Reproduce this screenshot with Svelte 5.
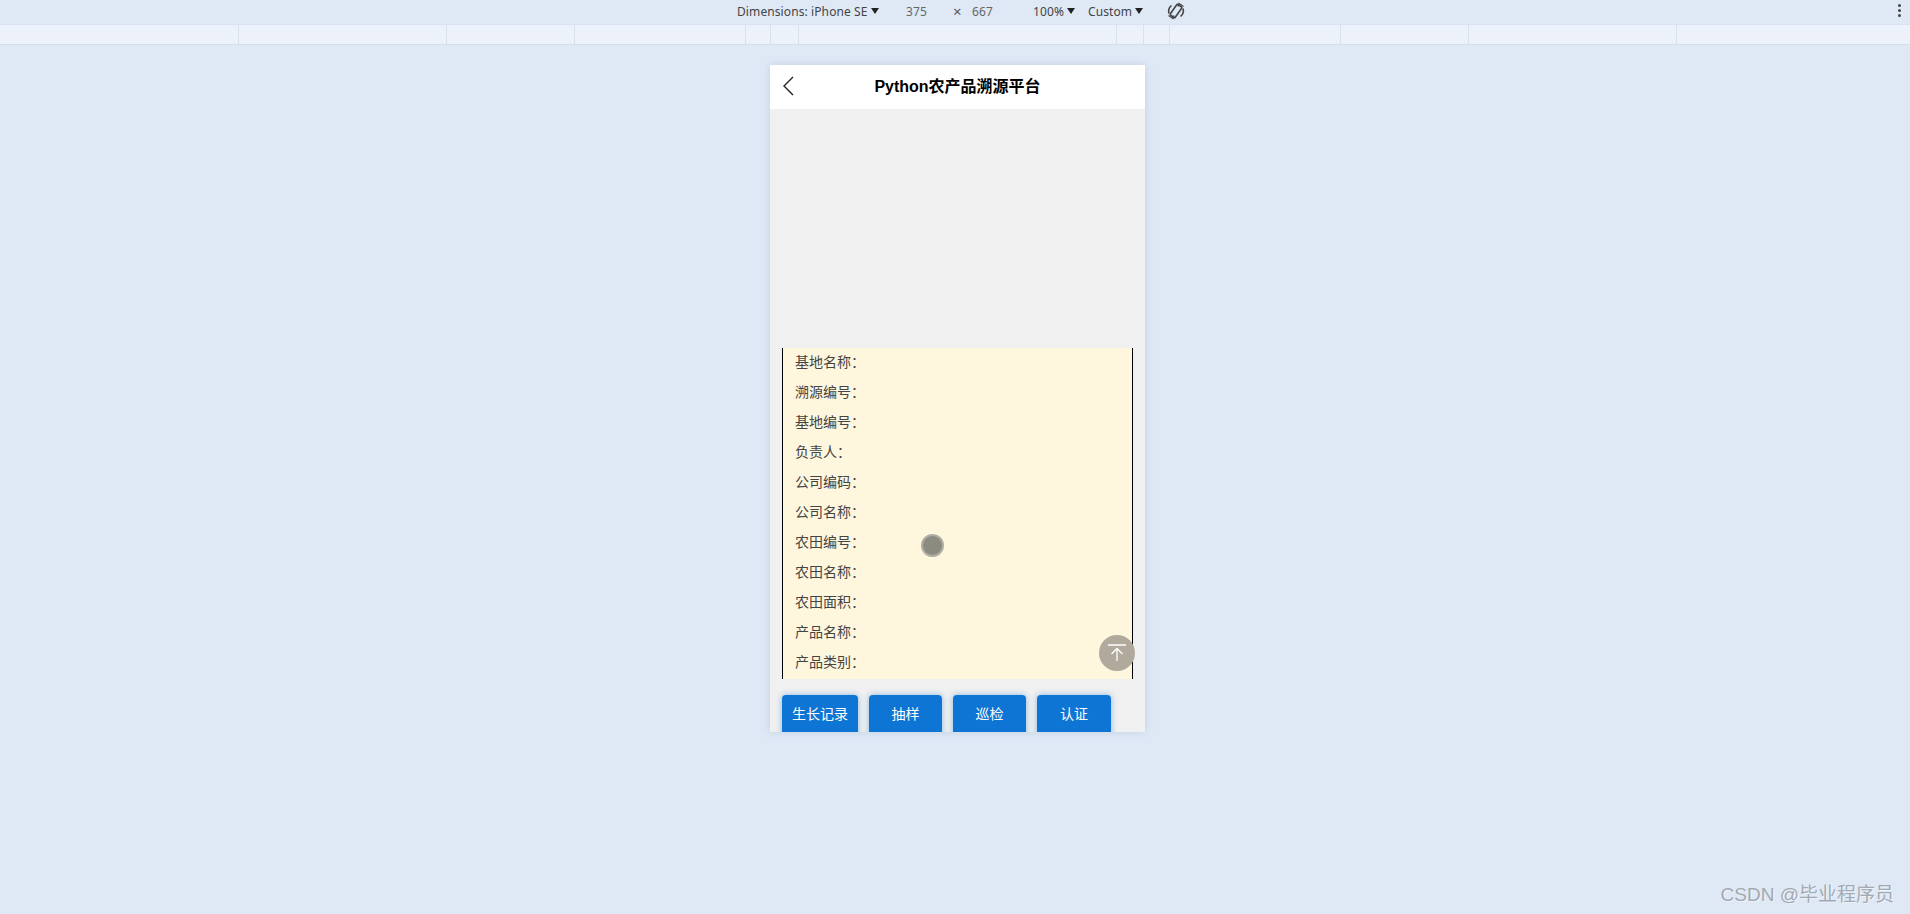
<script>
  const ticks = [239, 208, 128, 171, 25, 28, 318, 27, 26, 171, 128, 208]
  const fields = ['基地名称', '溯源编号', '基地编号', '负责人', '公司编码', '公司名称', '农田编号', '农田名称', '农田面积', '产品名称', '产品类别']
  const actions = [
    { label: '生长记录', w: 76 },
    { label: '抽样', w: 73 },
    { label: '巡检', w: 73 },
    { label: '认证', w: 74 }
  ]
</script>

<div class="page">
  <div class="toolbar">
    <span class="dim">Dimensions: iPhone SE<i class="caret"></i></span>
    <span class="num w375">375</span>
    <span class="times">×</span>
    <span class="num w667">667</span>
    <span class="zoom">100%<i class="caret"></i></span>
    <span class="custom">Custom<i class="caret"></i></span>
    <svg class="rotate" width="20" height="22" viewBox="0 0 20 22" fill="none" stroke="#444" stroke-width="1.6">
      <rect x="7" y="4.5" width="6" height="13" rx="1" transform="rotate(35 10 11)" />
      <path d="M3 13.5a7.5 7.5 0 0 1 2.5-8M17 8.5a7.5 7.5 0 0 1-2.5 8" />
      <path d="M2.5 15.5 7 18.5 8 15.5M17.5 6.5 13 3.5 12 6.5" stroke-width="1.2" />
    </svg>
    <span class="dots"><i></i><i></i><i></i></span>
  </div>
  <div class="ruler">
    {#each ticks as t}
      <span class="tick" style="width: {t}px"></span>
    {/each}
  </div>

  <div class="phone">
    <header>
      <svg class="back" width="12" height="20" viewBox="0 0 12 20" fill="none" stroke="#222" stroke-width="1.4">
        <path d="M11 1 2 10l9 9" />
      </svg>
      <h1>Python农产品溯源平台</h1>
    </header>
    <div class="banner"></div>
    <div class="detail">
      {#each fields as f}
        <div class="row">{f}：</div>
      {/each}
    </div>
    <div class="actions">
      {#each actions as a}
        <button style="width: {a.w}px">{a.label}</button>
      {/each}
    </div>
    <div class="to-top">
      <svg width="18" height="18" viewBox="0 0 18 18" fill="none" stroke="#fff" stroke-width="1.3">
        <path d="M0 1h18M9 17V4.5M3.5 10 9 4.5l5.5 5.5" />
      </svg>
    </div>
    <div class="cursor"></div>
  </div>

  <div class="mark">CSDN @毕业程序员</div>
</div>

<style>
  :global(body) {
    margin: 0;
    background: #dfe9f6;
  }
  .page {
    position: relative;
    height: 914px;
    overflow: hidden;
    background: #dfe9f6;
    font-family: "Noto Sans", "Noto Sans CJK SC", sans-serif;
  }
  .toolbar {
    height: 24px;
    box-sizing: border-box;
    padding: 0 0 2px 737px;
    display: flex;
    align-items: center;
    font-size: 12px;
    letter-spacing: 0.1px;
    color: #444;
    position: relative;
  }
  .caret {
    display: inline-block;
    width: 0;
    height: 0;
    border-left: 4px solid transparent;
    border-right: 4px solid transparent;
    border-top: 6px solid #222;
    margin-left: 3px;
    vertical-align: 2px;
  }
  .dim {
    width: 169px;
    white-space: nowrap;
  }
  .num {
    color: #666;
  }
  .w375 {
    width: 47px;
  }
  .times {
    width: 19px;
    color: #555;
    font-size: 15px;
  }
  .w667 {
    width: 61px;
  }
  .zoom {
    width: 55px;
    white-space: nowrap;
  }
  .custom {
    width: 78px;
    white-space: nowrap;
  }
  .rotate {
    flex: none;
  }
  .dots {
    position: absolute;
    right: 9px;
    top: 4px;
    display: flex;
    flex-direction: column;
    gap: 2px;
  }
  .dots i {
    width: 3px;
    height: 3px;
    border-radius: 50%;
    background: #444;
  }
  .ruler {
    display: flex;
    background: #edf2fa;
    border-top: 1px solid #d9e2f2;
    border-bottom: 1px solid #d5deec;
    box-sizing: border-box;
    height: 21px;
  }
  .tick {
    border-right: 1px solid #d9e0ee;
    box-sizing: border-box;
  }
  .phone {
    position: relative;
    width: 375px;
    height: 667px;
    margin: 20px 0 0 770px;
    background: #f0f0f0;
    box-shadow: 0 0 8px rgba(120, 140, 180, 0.25);
    overflow: hidden;
  }
  header {
    height: 44px;
    box-sizing: border-box;
    padding-bottom: 4px;
    background: #fff;
    display: flex;
    align-items: center;
    justify-content: center;
    position: relative;
  }
  .back {
    position: absolute;
    left: 12px;
    top: 11px;
  }
  h1 {
    margin: 0;
    font-family: "Liberation Sans", "Noto Sans CJK SC", sans-serif;
    font-size: 16px;
    font-weight: 700;
    color: #000;
  }
  .banner {
    height: 239px;
  }
  .detail {
    width: 351px;
    height: 331px;
    margin-left: 12px;
    box-sizing: border-box;
    background: #fff6de;
    border-left: 1px solid #000;
    border-right: 1px solid #000;
    padding-left: 12px;
    overflow: hidden;
  }
  .row {
    height: 30px;
    line-height: 26px;
    font-size: 14px;
    color: #444;
    font-family: "Noto Sans CJK SC", sans-serif;
  }
  .actions {
    display: flex;
    gap: 11px;
    margin: 16px 0 0 12px;
  }
  button {
    height: 44px;
    flex: none;
    border: none;
    border-radius: 4px;
    background: #0f75d4;
    color: #fff;
    font-size: 14px;
    font-family: "Noto Sans CJK SC", sans-serif;
    padding: 0 0 8px;
    box-shadow: 0 0 6px rgba(15, 117, 212, 0.45);
  }
  .to-top {
    position: absolute;
    left: 329px;
    top: 570px;
    width: 36px;
    height: 36px;
    border-radius: 50%;
    background: #b0a99c;
    display: flex;
    align-items: center;
    justify-content: center;
  }
  .cursor {
    position: absolute;
    left: 151px;
    top: 469px;
    width: 23px;
    height: 23px;
    box-sizing: border-box;
    border-radius: 50%;
    background: #8c8b80;
    border: 2px solid #b0aea2;
  }
  .mark {
    position: absolute;
    right: 16px;
    bottom: 8px;
    font-size: 19px;
    color: #a3a9b2;
    text-shadow: 1px 1px 0 #eef3fa;
    font-family: "Liberation Sans", "Noto Sans CJK SC", sans-serif;
  }
</style>
